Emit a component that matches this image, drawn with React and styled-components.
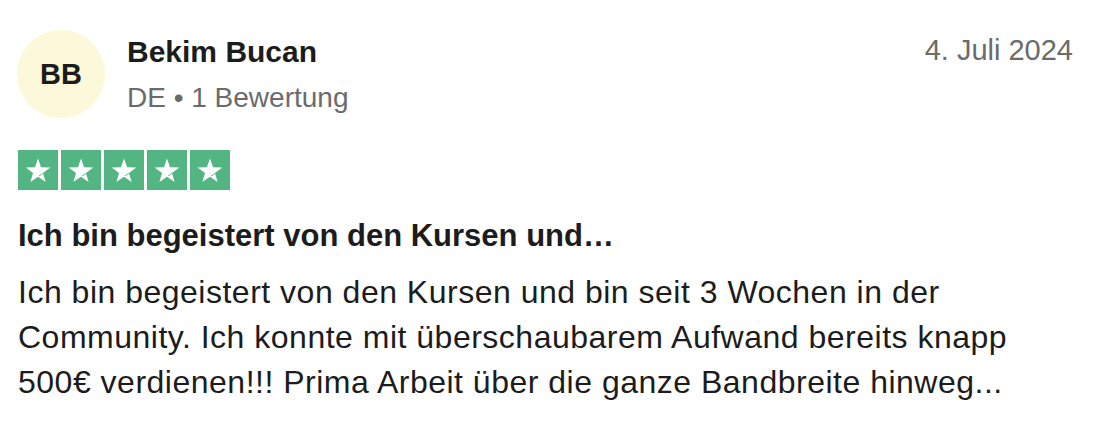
import React from 'react';
import styled, { createGlobalStyle } from 'styled-components';

const GlobalStyle = createGlobalStyle`
  body {
    margin: 0;
    background: #ffffff;
    font-family: "Liberation Sans", Arial, Helvetica, sans-serif;
  }
`;

const Card = styled.article`
  width: 1094px;
  height: 430px;
  box-sizing: border-box;
  padding: 30px 21px 0 17px;
  background: #ffffff;
  color: #1c1c1c;
`;

const Header = styled.header`
  display: flex;
  justify-content: space-between;
  align-items: flex-start;
`;

const User = styled.div`
  display: flex;
  align-items: flex-start;
  gap: 22px;
`;

const Avatar = styled.div`
  width: 88px;
  height: 88px;
  border-radius: 50%;
  background: #fcf8da;
  display: flex;
  align-items: center;
  justify-content: center;
  font-size: 29px;
  font-weight: 700;
  color: #1c1c1c;
`;

const Info = styled.div`
  display: flex;
  flex-direction: column;
  padding-top: 4px;
`;

const Name = styled.div`
  font-size: 30px;
  line-height: 36px;
  font-weight: 700;
  color: #1c1c1c;
`;

const Meta = styled.div`
  margin-top: 10px;
  font-size: 28px;
  line-height: 36px;
  color: #6b6b6b;
`;

const DateText = styled.time`
  padding-top: 2px;
  font-size: 29px;
  line-height: 36px;
  color: #6b6b6b;
`;

const Stars = styled.div`
  display: flex;
  gap: 3px;
  margin: 32px 0 0 1px;
`;

const StarBox = styled.span`
  width: 40px;
  height: 40px;
  background: #52b582;
  display: flex;
`;

const Title = styled.h2`
  margin: 26px 0 0 1px;
  font-size: 31px;
  line-height: 40px;
  font-weight: 700;
  color: #1c1c1c;
`;

const Body = styled.p`
  margin: 14px 0 0 1px;
  font-size: 32px;
  line-height: 45px;
  letter-spacing: 0.5px;
  color: #1c1c1c;
`;

const Star = () => (
  <StarBox>
    <svg width="40" height="40" viewBox="0 0 40 40">
      <polygon
        fill="#ffffff"
        points="20,8.5 23.06,17.29 32.36,17.48 24.95,23.11 27.64,32.02 20,26.7 12.36,32.02 15.05,23.11 7.64,17.48 16.94,17.29"
      />
      <line x1="21" y1="26" x2="24.8" y2="23.6" stroke="#52b582" strokeWidth="0.9" />
    </svg>
  </StarBox>
);

export default function App() {
  return (
    <>
      <GlobalStyle />
      <Card>
        <Header>
          <User>
            <Avatar>BB</Avatar>
            <Info>
              <Name>Bekim Bucan</Name>
              <Meta>DE • 1 Bewertung</Meta>
            </Info>
          </User>
          <DateText>4. Juli 2024</DateText>
        </Header>
        <Stars>
          {[0, 1, 2, 3, 4].map(i => <Star key={i} />)}
        </Stars>
        <Title>Ich bin begeistert von den Kursen und…</Title>
        <Body>
          Ich bin begeistert von den Kursen und bin seit 3 Wochen in der
          <br />
          Community. Ich konnte mit überschaubarem Aufwand bereits knapp
          <br />
          500€ verdienen!!! Prima Arbeit über die ganze Bandbreite hinweg...
        </Body>
      </Card>
    </>
  );
}
